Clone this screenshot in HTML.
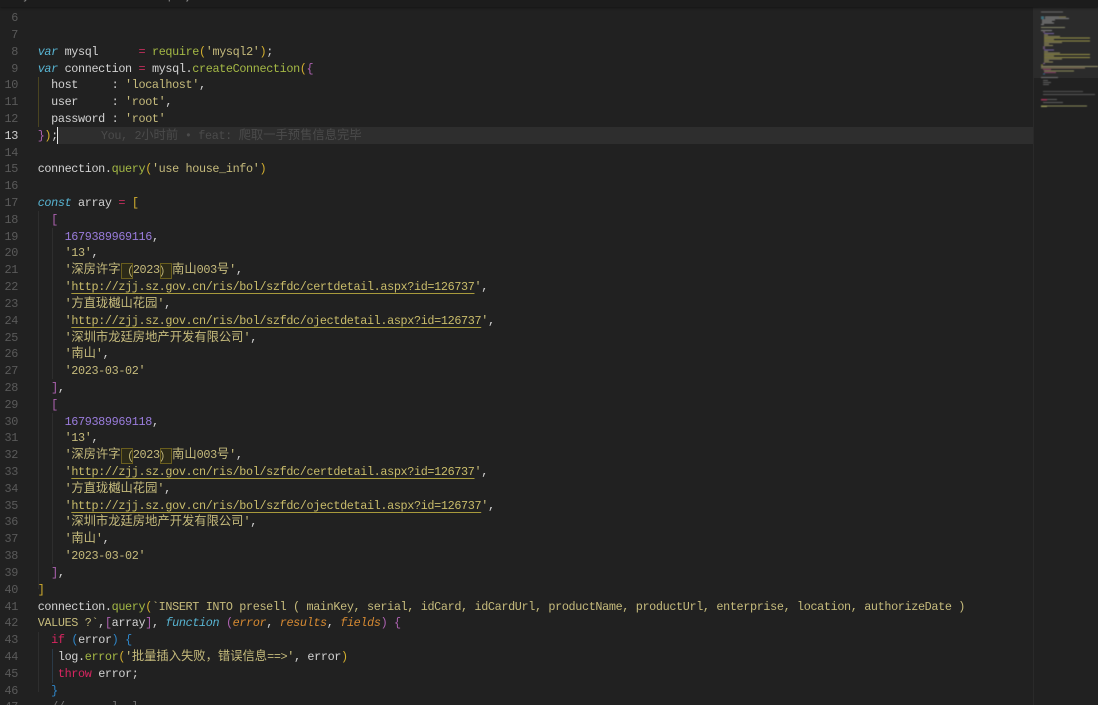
<!DOCTYPE html>
<html lang="zh"><head><meta charset="utf-8"><title>example.js</title>
<style>
html,body{margin:0;padding:0;width:1098px;height:705px;overflow:hidden;background:#212121}
#e{position:absolute;left:0;top:0;width:1098px;height:705px;overflow:hidden;background:#212121;filter:blur(.35px)}
#top{position:absolute;left:0;top:0;width:1098px;height:7px;background:#1c1c1c;overflow:hidden;box-shadow:0 1px 2px #151515;z-index:5}
#top div{position:absolute;left:4px;top:-11px;font:11.5px/14px "Liberation Sans","Noto Sans CJK SC",sans-serif;color:#8a8a8a;white-space:pre}
#hl{position:absolute;left:58px;top:126.5px;width:975px;height:17px;background:#2e2e2e}
#cur{position:absolute;left:57px;top:127px;width:1.4px;height:17px;background:#e8e8e8}
.g{position:absolute;width:1px;background:#2e2e2e}
#n,#c{position:absolute;top:10.1px;height:694.9px;overflow:hidden;font-family:"Liberation Mono",monospace;font-size:11.8px;letter-spacing:-.36px}
#n{left:0;width:18px;text-align:right;color:#5a5a5a}
#c{left:37.7px;width:1000px;color:#d2d2d2}
#n div,#c div{height:16.825px;line-height:16.825px;white-space:pre}
.k{color:#58b4d2;font-style:italic}.o{color:#c22f5c}.f{color:#a4b845}.s{color:#c6bb7c}
.y{color:#d2ae2e}.p{color:#ad62b0}.b{color:#2f86c8}.m{color:#9a7cdc}.a{color:#d68a32;font-style:italic}
.r{color:#d82560}.w{color:#c9c9c9}
.u{color:#c9bc6a;text-decoration:underline;text-decoration-color:#a89a3c;text-underline-offset:2.5px}
i.c{font-style:normal;font-family:"Noto Sans CJK SC","WenQuanYi Zen Hei",sans-serif;font-size:12.3px;letter-spacing:0;line-height:0}
.x{outline:1px solid #6a5e1e;outline-offset:-1px;background:#2c2a18;display:inline-block;height:16px;line-height:16px!important;vertical-align:top;margin-top:.4px}
.bl{color:#4b4b4b;margin-left:2.7px}
.cm{color:#6f6f6f}
#mm{position:absolute;left:1033px;top:0;width:65px;height:705px;background:#212121;border-left:1px solid #2a2a2a;box-sizing:border-box}
#sl{position:absolute;left:1033px;top:0;width:65px;height:78px;background:#2b2b2b}
#msvg{position:absolute;left:1028px;top:0;filter:blur(.45px) brightness(1.1)}
</style></head><body>
<div id="e">
<div id="hl"></div>
<div class="g" style="left:38px;top:77px;height:50px;background:#4a4420"></div>
<div class="g" style="left:38px;top:211px;height:378px"></div>
<div class="g" style="left:52px;top:228px;height:151px"></div>
<div class="g" style="left:52px;top:413px;height:151px"></div>
<div class="g" style="left:38px;top:632px;height:60px"></div>
<div class="g" style="left:52px;top:649px;height:34px;background:#2a3a48"></div>
<div id="n"><div>6</div><div>7</div><div>8</div><div>9</div><div>10</div><div>11</div><div>12</div><div style="color:#cfcfcf">13</div><div>14</div><div>15</div><div>16</div><div>17</div><div>18</div><div>19</div><div>20</div><div>21</div><div>22</div><div>23</div><div>24</div><div>25</div><div>26</div><div>27</div><div>28</div><div>29</div><div>30</div><div>31</div><div>32</div><div>33</div><div>34</div><div>35</div><div>36</div><div>37</div><div>38</div><div>39</div><div>40</div><div>41</div><div>42</div><div>43</div><div>44</div><div>45</div><div>46</div><div>47</div></div>
<div id="c">
<div> </div>
<div> </div>
<div><span class="k">var</span> mysql      <span class="o">=</span> <span class="f">require</span><span class="y">(</span><span class="s">'mysql2'</span><span class="y">)</span>;</div>
<div><span class="k">var</span> connection <span class="o">=</span> mysql.<span class="f">createConnection</span><span class="y">(</span><span class="p">{</span></div>
<div>  host     : <span class="s">'localhost'</span>,</div>
<div>  user     : <span class="s">'root'</span>,</div>
<div>  password : <span class="s">'root'</span></div>
<div><span class="p">}</span><span class="y">)</span>;      <span class="bl">You, 2<i class="c">小时前</i> • feat: <i class="c">爬取一手预售信息完毕</i></span></div>
<div> </div>
<div>connection.<span class="f">query</span><span class="y">(</span><span class="s">'use house_info'</span><span class="y">)</span></div>
<div> </div>
<div><span class="k">const</span> array <span class="o">=</span> <span class="y">[</span></div>
<div>  <span class="p">[</span></div>
<div>    <span class="m">1679389969116</span>,</div>
<div>    <span class="s">'13'</span>,</div>
<div>    <span class="s">'<i class="c">深房许字</i><i class="c x">（</i>2023<i class="c x">）</i><i class="c">南山</i>003<i class="c">号</i>'</span>,</div>
<div>    <span class="s">'</span><span class="u">http://zjj.sz.gov.cn/ris/bol/szfdc/certdetail.aspx?id=126737</span><span class="s">'</span>,</div>
<div>    <span class="s">'<i class="c">方直珑樾山花园</i>'</span>,</div>
<div>    <span class="s">'</span><span class="u">http://zjj.sz.gov.cn/ris/bol/szfdc/ojectdetail.aspx?id=126737</span><span class="s">'</span>,</div>
<div>    <span class="s">'<i class="c">深圳市龙廷房地产开发有限公司</i>'</span>,</div>
<div>    <span class="s">'<i class="c">南山</i>'</span>,</div>
<div>    <span class="s">'2023-03-02'</span></div>
<div>  <span class="p">]</span>,</div>
<div>  <span class="p">[</span></div>
<div>    <span class="m">1679389969118</span>,</div>
<div>    <span class="s">'13'</span>,</div>
<div>    <span class="s">'<i class="c">深房许字</i><i class="c x">（</i>2023<i class="c x">）</i><i class="c">南山</i>003<i class="c">号</i>'</span>,</div>
<div>    <span class="s">'</span><span class="u">http://zjj.sz.gov.cn/ris/bol/szfdc/certdetail.aspx?id=126737</span><span class="s">'</span>,</div>
<div>    <span class="s">'<i class="c">方直珑樾山花园</i>'</span>,</div>
<div>    <span class="s">'</span><span class="u">http://zjj.sz.gov.cn/ris/bol/szfdc/ojectdetail.aspx?id=126737</span><span class="s">'</span>,</div>
<div>    <span class="s">'<i class="c">深圳市龙廷房地产开发有限公司</i>'</span>,</div>
<div>    <span class="s">'<i class="c">南山</i>'</span>,</div>
<div>    <span class="s">'2023-03-02'</span></div>
<div>  <span class="p">]</span>,</div>
<div><span class="y">]</span></div>
<div>connection.<span class="f">query</span><span class="y">(</span><span class="s">`INSERT INTO presell ( mainKey, serial, idCard, idCardUrl, productName, productUrl, enterprise, location, authorizeDate )</span></div>
<div><span class="s">VALUES ?`</span>,<span class="p">[</span>array<span class="p">]</span>, <span class="k">function</span> <span class="p">(</span><span class="a">error</span>, <span class="a">results</span>, <span class="a">fields</span><span class="p">)</span> <span class="p">{</span></div>
<div>  <span class="r">if</span> <span class="b">(</span>error<span class="b">)</span> <span class="b">{</span></div>
<div>   log.<span class="f">error</span><span class="y">(</span><span class="s">'<i class="c">批量插入失败，错误信息</i>==&gt;'</span>, error<span class="y">)</span></div>
<div>   <span class="r">throw</span> error;</div>
<div>  <span class="b">}</span></div>
<div class="cm">  //       l  l</div>
</div>
<div id="cur"></div>
<div id="mm"></div><div id="sl"></div>
<svg id="msvg" width="70" height="110" viewBox="0 0 70 110">
<g shape-rendering="crispEdges">
<rect x="11" y="5.5" width="4" height="1.2" fill="#3f7f78"/><rect x="15" y="5.5" width="5" height="1.2" fill="#7f9f50"/><rect x="21" y="5.5" width="17" height="1.2" fill="#5a5a4a"/>
<rect x="13" y="11.5" width="22" height="1" fill="#5f5f5f"/>
<rect x="13" y="16.5" width="3" height="1" fill="#3f7f90"/><rect x="17" y="16.5" width="14" height="1" fill="#777"/><rect x="31" y="16.5" width="7" height="1" fill="#807a50"/>
<rect x="13" y="18" width="3" height="1" fill="#3f7f90"/><rect x="17" y="18" width="24" height="1" fill="#777"/>
<rect x="14" y="19.5" width="13" height="1" fill="#777"/><rect x="14" y="21" width="10" height="1" fill="#777"/><rect x="14" y="22.5" width="12" height="1" fill="#777"/>
<rect x="13" y="24" width="3" height="1" fill="#777"/>
<rect x="13" y="27" width="24" height="1" fill="#7a7a60"/>
<rect x="13" y="30" width="11" height="1" fill="#777"/>
<rect x="15" y="31.5" width="2" height="1" fill="#775a80"/>
<rect x="16" y="33" width="10" height="1" fill="#6a5a90"/><rect x="16" y="34.5" width="4" height="1" fill="#807a50"/><rect x="16" y="36" width="16" height="1" fill="#807a50"/><rect x="16" y="37.5" width="46" height="1" fill="#8a8440"/><rect x="16" y="39" width="10" height="1" fill="#807a50"/><rect x="16" y="40.5" width="46" height="1" fill="#8a8440"/><rect x="16" y="42" width="18" height="1" fill="#807a50"/><rect x="16" y="43.5" width="5" height="1" fill="#807a50"/><rect x="16" y="45" width="9" height="1" fill="#807a50"/>
<rect x="15" y="46.5" width="2" height="1" fill="#775a80"/><rect x="15" y="48" width="2" height="1" fill="#775a80"/>
<rect x="16" y="49.5" width="10" height="1" fill="#6a5a90"/><rect x="16" y="51" width="4" height="1" fill="#807a50"/><rect x="16" y="52.5" width="16" height="1" fill="#807a50"/><rect x="16" y="54" width="46" height="1" fill="#8a8440"/><rect x="16" y="55.5" width="10" height="1" fill="#807a50"/><rect x="16" y="57" width="46" height="1" fill="#8a8440"/><rect x="16" y="58.5" width="18" height="1" fill="#807a50"/><rect x="16" y="60" width="5" height="1" fill="#807a50"/><rect x="16" y="61.5" width="9" height="1" fill="#807a50"/>
<rect x="15" y="63" width="2" height="1" fill="#775a80"/><rect x="13" y="64.5" width="2" height="1" fill="#807a30"/>
<rect x="13" y="66" width="57" height="1.2" fill="#8a8660"/>
<rect x="13" y="67.5" width="44" height="1" fill="#7a6a50"/>
<rect x="15" y="69" width="8" height="1" fill="#804060"/>
<rect x="16" y="70.5" width="30" height="1" fill="#7f7f50"/>
<rect x="16" y="72" width="12" height="1" fill="#804060"/>
<rect x="15" y="73.5" width="2" height="1" fill="#2f6080"/>
<rect x="13" y="77" width="17" height="1" fill="#666"/>
<rect x="15" y="80" width="5" height="1" fill="#555"/><rect x="15" y="82" width="8" height="1" fill="#555"/><rect x="15" y="84" width="6" height="1" fill="#555"/>
<rect x="15" y="91" width="40" height="1" fill="#4a4a4a"/><rect x="15" y="94" width="52" height="1" fill="#505050"/>
<rect x="13" y="99" width="6" height="1.5" fill="#903050"/><rect x="19" y="99" width="10" height="1" fill="#555"/>
<rect x="15" y="102" width="20" height="1" fill="#555"/>
<rect x="13" y="105.5" width="6" height="1.5" fill="#8a8a50"/><rect x="19" y="105.5" width="40" height="1.2" fill="#7a7a50"/>
</g></svg>
<div id="top"><div>&gt; MyShares &gt; house &gt; JS example.js</div></div>
</div>
</body></html>
